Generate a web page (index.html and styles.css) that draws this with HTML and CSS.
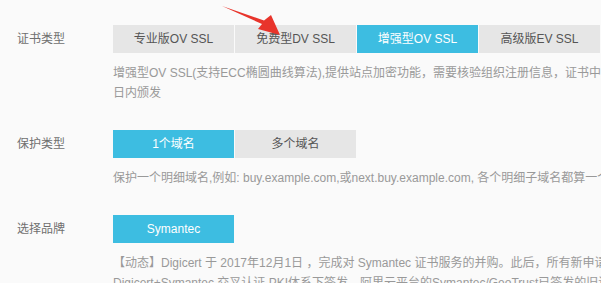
FILE: index.html
```html
<!DOCTYPE html>
<html lang="zh-CN">
<head>
<meta charset="utf-8">
<title>SSL证书选择</title>
<link rel="stylesheet" href="styles.css">
</head>
<body>
<div class="page">
  <div class="row">
    <div class="label">证书类型</div>
    <div class="content">
      <div class="tabs">
        <div class="tab">专业版OV SSL</div>
        <div class="tab">免费型DV SSL</div>
        <div class="tab active">增强型OV SSL</div>
        <div class="tab">高级版EV SSL</div>
      </div>
      <div class="desc">增强型OV SSL(支持ECC椭圆曲线算法),提供站点加密功能，需要核验组织注册信息，证书中显示企业名称，3-5个工作<br>日内颁发</div>
    </div>
  </div>
  <div class="row">
    <div class="label">保护类型</div>
    <div class="content">
      <div class="tabs">
        <div class="tab active">1个域名</div>
        <div class="tab">多个域名</div>
      </div>
      <div class="desc">保护一个明细域名,例如: buy.example.com,或next.buy.example.com, 各个明细子域名都算一个域名</div>
    </div>
  </div>
  <div class="row">
    <div class="label">选择品牌</div>
    <div class="content">
      <div class="tabs">
        <div class="tab active">Symantec</div>
      </div>
      <div class="desc">【动态】Digicert 于 2017年12月1日 ，完成对 Symantec 证书服务的并购。此后，所有新申请的证书都将在<br>Digicert+Symantec 交叉认证 PKI体系下签发，阿里云平台的Symantec/GeoTrust已签发的旧证书不受影响。</div>
    </div>
  </div>
  <svg class="arrow" width="70" height="40" viewBox="0 0 70 40">
    <polygon points="2,6 44,20.5 51,15 60,35 38,29 42,24" fill="#e8342b"/>
  </svg>
</div>
</body>
</html>
```

FILE: styles.css
```css
html, body {
  margin: 0;
  padding: 0;
  overflow: hidden;
  background: #fafafa;
}
body {
  font-family: "Liberation Sans", Arial, "Noto Sans CJK SC", sans-serif;
  font-size: 12px;
}
.page {
  position: relative;
  width: 900px;
  padding: 25px 0 0 17px;
  display: flex;
  flex-direction: column;
  gap: 27px;
}
.row {
  display: flex;
}
.label {
  width: 96px;
  flex: none;
  height: 28px;
  line-height: 28px;
  color: #6f6f6f;
  font-size: 12px;
}
.content {
  display: flex;
  flex-direction: column;
}
.tabs {
  display: flex;
  gap: 1px;
}
.tab {
  width: 121px;
  height: 28px;
  line-height: 28px;
  text-align: center;
  background: #e6e6e6;
  color: #555;
  font-size: 12px;
}
.tab.active {
  background: #3dbde1;
  color: #fff;
}
.desc {
  margin-top: 10px;
  line-height: 20px;
  color: #999;
  font-size: 12px;
  white-space: nowrap;
}
.arrow {
  position: absolute;
  left: 220px;
  top: 0;
}
```
